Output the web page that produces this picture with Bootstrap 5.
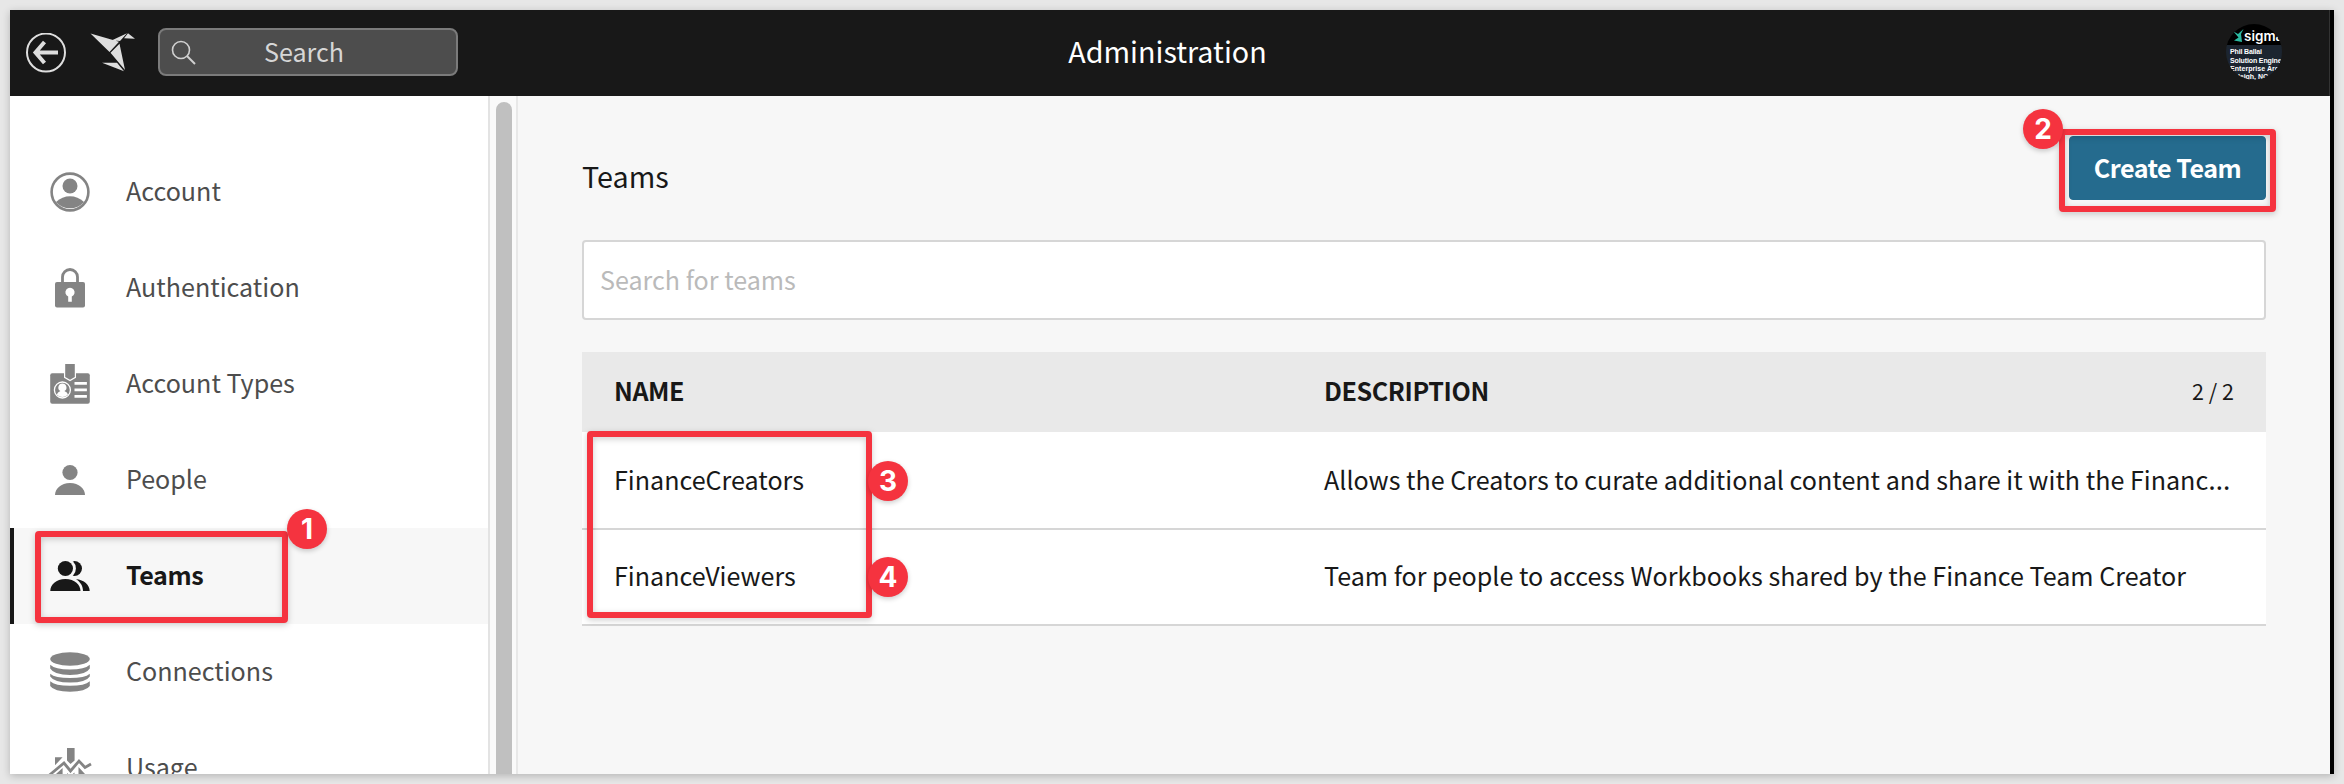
<!DOCTYPE html>
<html lang="en">
<head>
<meta charset="utf-8">
<meta name="viewport" content="width=device-width, initial-scale=1">
<title>Administration</title>
<link href="https://cdn.jsdelivr.net/npm/bootstrap@5.3.0/dist/css/bootstrap.min.css" rel="stylesheet">
<style>
  body { background:#e7e7e7; font-family:"Noto Sans CJK SC",sans-serif; font-size:25.1px; line-height:36px; color:#181818; height:784px; padding:10px; overflow:hidden; }
  .app-window { height:764px; border-right:4px solid #000; background:#f7f7f7; box-shadow:0 2px 8px rgba(0,0,0,.22); }
  .app-bar { height:86px; background:#181818; flex:none; display:grid; grid-template-columns:1fr auto 1fr; padding:0 20px 0 16px; border-right:1px solid #333; }
  .app-title { font-size:28.7px; color:#fff; padding-bottom:4px; }
  .bar-search { width:300px; height:48px; margin:-2px 0 0 22px; background:#4d4d4d; border:2px solid #7b7b7b; border-radius:8px; color:#d6d6d6; }
  .bar-search span { margin-left:68px; padding-bottom:3px; }
  .bar-search svg { margin-left:11px; }
  .avatar { width:56px; height:56px; margin:-2px 27px 0 auto; }
  .app-body { height:678px; }
  .side-nav { width:480px; border-right:2px solid #e3e3e3; background:#fff; padding-top:48px; flex:none; overflow:hidden; }
  .side-item { height:96px; flex:none; padding-left:40px; gap:36px; color:#4d4d4d; position:relative; }
  .side-item svg { width:40px; height:40px; color:#848484; overflow:visible; flex:none; }
  .side-item > span.txt { padding-bottom:5px; }
  .side-item.current { background:#f7f7f7; color:#181818; font-weight:600; letter-spacing:-.4px; border-left:4px solid #181818; padding-left:36px; }
  .side-item.current svg { color:#181818; }
  .scroll-track { width:28px; border-right:2px solid #e8e8e8; padding:6px 4px 0 6px; background:#fafafa; flex:none; }
  .scroll-thumb { width:16px; background:#c0c0c0; border-radius:8px 8px 0 0; }
  .content { padding:40px 64px 0; min-width:0; }
  .page-title { font-size:28.7px; padding-top:22px; }
  .create-btn { --bs-btn-bg:#256b8e; --bs-btn-color:#fff; --bs-btn-border-color:#256b8e; width:197px; height:64px; border-radius:4px; font-size:25.1px; font-weight:600; letter-spacing:-.5px; padding:0 0 1px; line-height:1; }
  .team-search { height:80px; margin-top:40px; border:2px solid #d6d6d6; border-radius:4px; padding:0 16px 2px; font-size:25.1px; background:#fff; }
  .team-search::placeholder { color:#bababa; opacity:1; }
  .team-grid { margin-top:32px; position:relative; }
  .grid-row { display:grid; grid-template-columns:710px minmax(0,1fr); align-items:center; background:#fff; border-bottom:2px solid #d6d6d6; padding:0 32px 3px; height:98px; }
  .grid-row + .grid-row ~ .grid-row { height:96px; padding-bottom:4px; }
  .grid-row.head-row { grid-template-columns:710px 1fr auto; background:#e9e9e9; height:80px; border:0; font-weight:600; letter-spacing:-.4px; padding-bottom:4px; }
  .head-row .count { font-weight:400; font-size:21.5px; letter-spacing:0; padding-top:1px; }
  .dots { font:28px/1 "Noto Sans",sans-serif; }
  .mark-box { position:absolute; border:6px solid #f5333f; border-radius:4px; filter:drop-shadow(0 2px 3px rgba(0,0,0,.2)); }
  .mark-dot { position:absolute; width:40px; height:40px; border-radius:50%; background:#f5333f; color:#fff; font:700 28px/40px Inter,sans-serif; text-align:center; box-shadow:0 2px 5px rgba(0,0,0,.2); z-index:2; }
</style>
</head>
<body>
<div class="app-window d-flex flex-column">
  <header class="app-bar align-items-center">
    <div class="d-flex align-items-center">
      <svg width="40" height="40" viewBox="0 0 40 40" fill="none" stroke="#dedede"><circle cx="20" cy="19.500" r="19" stroke-width="2"/><path d="M32 19.500H10M18.500 9 9.500 19.500l9 10.500" stroke-width="4"/></svg>
      <svg class="ms-4" width="46" height="40" viewBox="0 0 46 40" fill="#dedede"><path d="M.5 .5 29 8.700 19.500 19ZM22 7.200 37 .2 30 8ZM38 .2 45 5.700 34 5.300ZM20.500 19.700 29.500 10.700 35 37ZM12 29.700H27L34 38.200Z"/></svg>
      <div class="bar-search d-flex align-items-center">
        <svg width="25" height="25" viewBox="0 0 25 25" fill="none" stroke="#d0d0d0" stroke-width="1.600"><circle cx="10" cy="10" r="8.500"/><path d="m16 16 8 8" stroke-width="2"/></svg>
        <span>Search</span>
      </div>
    </div>
    <div class="app-title">Administration</div>
    <svg class="avatar" viewBox="0 0 56 56">
      <defs><clipPath id="disc"><circle cx="28" cy="28" r="28"/></clipPath></defs>
      <g clip-path="url(#disc)"><path fill="#000" d="M0 0h56v21H0z"/><path fill="#1c2530" d="M0 21h56v35H0z"/>
      <path fill="#2bb8a0" d="M7.500 7.500 12 10 17.500 5 15 10 16 18 8 16.500 12.500 13.500Z"/>
      <g fill="#fff"><text x="18" y="16.500" font-family="Inter,sans-serif" font-size="13.500" font-weight="600">sigma</text>
      <g font-family="Liberation Sans,sans-serif" font-weight="700" font-size="7"><text x="4" y="30" textLength="32">Phil Ballai</text><text x="4" y="38.500" textLength="58">Solution Engineer</text><text x="4" y="46.500" textLength="53">Enterprise Arch</text><text x="3" y="54.500" textLength="39">Raleigh, NC</text></g></g></g>
    </svg>
  </header>
  <div class="app-body d-flex">
    <nav class="side-nav d-flex flex-column">
      <div class="side-item d-flex align-items-center"><svg viewBox="0 0 40 40" fill="currentColor"><circle cx="20" cy="20" r="18.400" fill="none" stroke="currentColor" stroke-width="2.600"/><circle cx="20" cy="14" r="7.500"/><path d="M6 30C10 26.200 15 24.300 20 24.300S30 26.200 34 30A18.700 18.700 0 0 1 6 30Z"/></svg><span class="txt">Account</span></div>
      <div class="side-item d-flex align-items-center"><svg viewBox="0 0 40 40" fill="currentColor"><path d="M12.500 15V9a7.500 7.500 0 0 1 15 0v6" fill="none" stroke="currentColor" stroke-width="2.800"/><rect x="5" y="14" width="30" height="25.500" rx="2"/><path fill="#fff" d="M18.200 33.700V28.500a4.600 4.600 0 1 1 3.600 0v5.200z"/></svg><span class="txt">Authentication</span></div>
      <div class="side-item d-flex align-items-center"><svg viewBox="0 0 40 40" fill="currentColor"><rect x=".2" y="9.300" width="39.600" height="30.400" rx="2"/><path d="M15.200 0h9.600v13L20 15.800 15.200 13z" stroke="#fff" stroke-width="2.400"/><path d="M15.200 0h9.600v13L20 15.800 15.200 13z"/><circle cx="12.400" cy="26" r="8" fill="none" stroke="#fff" stroke-width="1.300"/><path fill="#fff" d="M12.400 19.500a4 4 0 0 1 2 7.500q3 1 3.600 3.500a7.500 7.500 0 0 1-11.200 0Q7.500 28 10.400 27a4 4 0 0 1 2-7.500zM24.500 18h12.400v2.700H24.500zM24.500 24.500h12.400v2.700H24.500zM24.500 31h12.400v2.700H24.500z"/></svg><span class="txt">Account Types</span></div>
      <div class="side-item d-flex align-items-center"><svg viewBox="0 0 40 40" fill="currentColor"><circle cx="20" cy="12.500" r="7.600"/><path d="M5 35C5 29 11 23 20 23S35 29 35 35Z"/></svg><span class="txt">People</span></div>
      <div class="side-item current d-flex align-items-center"><svg viewBox="0 0 40 40" fill="currentColor"><circle cx="24.400" cy="12.500" r="7.600"/><circle cx="15.600" cy="12.500" r="10.300" fill="#f7f7f7"/><circle cx="15.400" cy="12.500" r="7.600"/><path d="M.3 35C.3 29 6 23 15.400 23S30.500 29 30.500 35ZM26 23.200C34 23.500 39.700 29 39.700 35H33C33 30 30.500 26 26 23.200Z"/></svg><span class="txt">Teams</span></div>
      <div class="side-item d-flex align-items-center"><svg viewBox="0 0 40 40" fill="currentColor"><ellipse cx="20" cy="7" rx="19.800" ry="6.700"/><path d="M.2 12.700Q5 17.500 20 17.500T39.800 12.700V16.500Q36 23 20 23T.2 16.500ZM.2 21.700Q5 26 20 26T39.800 21.700V24.500Q36 30.500 20 30.500T.2 24.500ZM.2 29.300Q5 33.800 20 33.800T39.800 29.300V34Q36 39.700 20 39.700T.2 34Z"/></svg><span class="txt">Connections</span></div>
      <div class="side-item d-flex align-items-center"><svg viewBox="0 0 40 40" fill="currentColor"><path d="M17 0h7.600v12.500L20.500 16 17 12.500zM5 9.300h7.600L5 17.300zM6 26 12.600 20V40H6zM17 25l3.500 3 4-3.500V40H17zM28.500 19l6.500 7v14h-6.500z"/><path d="M-.5 27 14 15l6.500 8L29 13l6 6.500 6-3.500" fill="none" stroke="currentColor" stroke-width="2.800"/></svg><span class="txt">Usage</span></div>
    </nav>
    <div class="scroll-track d-flex"><div class="scroll-thumb"></div></div>
    <main class="content flex-grow-1">
      <div class="d-flex justify-content-between align-items-start position-relative">
        <div class="page-title">Teams</div>
        <button class="btn create-btn">Create Team</button>
        <div class="mark-box" style="right:-10px;top:-7px;width:217px;height:83px"></div>
        <div class="mark-dot" style="right:203px;top:-27px">2</div>
      </div>
      <input class="form-control team-search" placeholder="Search for teams">
      <div class="team-grid">
        <div class="grid-row head-row"><div>NAME</div><div>DESCRIPTION</div><div class="count">2 / 2</div></div>
        <div class="grid-row"><div>FinanceCreators</div><div class="text-nowrap">Allows the Creators to curate additional content and share it with the Financ<span class="dots">…</span></div></div>
        <div class="grid-row"><div>FinanceViewers</div><div class="text-truncate">Team for people to access Workbooks shared by the Finance Team Creator</div></div>
        <div class="mark-box" style="left:5px;top:79px;width:285px;height:187px"></div>
        <div class="mark-dot" style="left:286px;top:109px">3</div>
        <div class="mark-dot" style="left:286px;top:205px">4</div>
      </div>
    </main>
  </div>
</div>
<div class="mark-box" style="left:35px;top:531px;width:253px;height:92px"></div>
<div class="mark-dot" style="left:287px;top:509px">1</div>
<script src="https://cdn.jsdelivr.net/npm/bootstrap@5.3.0/dist/js/bootstrap.bundle.min.js"></script>
</body>
</html>
